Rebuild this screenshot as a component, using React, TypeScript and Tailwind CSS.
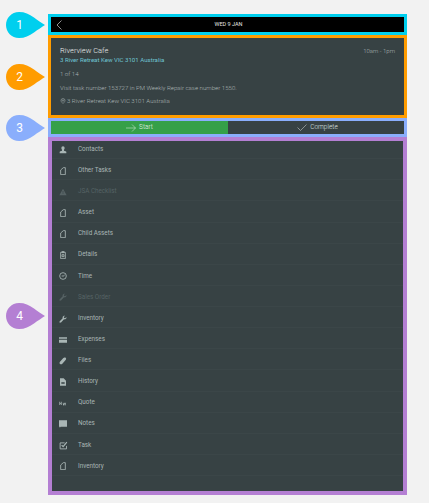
const rows = [
  { label: 'Contacts', icon: 'person' },
  { label: 'Other Tasks', icon: 'doc' },
  { label: 'JSA Checklist', icon: 'warning', disabled: true },
  { label: 'Asset', icon: 'doc' },
  { label: 'Child Assets', icon: 'doc' },
  { label: 'Details', icon: 'clipboard' },
  { label: 'Time', icon: 'clock' },
  { label: 'Sales Order', icon: 'wrench', disabled: true },
  { label: 'Inventory', icon: 'wrench' },
  { label: 'Expenses', icon: 'card' },
  { label: 'Files', icon: 'clip' },
  { label: 'History', icon: 'file' },
  { label: 'Quote', icon: 'quote' },
  { label: 'Notes', icon: 'note' },
  { label: 'Task', icon: 'check' },
  { label: 'Inventory', icon: 'doc' },
];

function RowIcon({ name }: { name: string }) {
  const props = { className: 'w-[8px] h-[8px]', viewBox: '0 0 24 24', fill: 'currentColor' };
  switch (name) {
    case 'person':
      return (
        <svg {...props}>
          <path d="M12 1a5 5 0 0 1 5 5c0 2.500-1.200 4.400-2 5.500v2.500c3 .6 7 1.600 7 4v4H2v-4c0-2.400 4-3.400 7-4v-2.500C8.200 10.400 7 8.500 7 6a5 5 0 0 1 5-5z" />
        </svg>
      );
    case 'doc':
      return (
        <svg {...props} fill="none" stroke="currentColor" strokeWidth={2.6}>
          <path d="M5 23V9l8-7h6v21z" />
        </svg>
      );
    case 'warning':
      return (
        <svg {...props}>
          <path d="M12 2 1 22h22zM13 18h-2v-2h2zm0-4h-2V9h2z" />
        </svg>
      );
    case 'clipboard':
      return (
        <svg {...props} fill="none" stroke="currentColor" strokeWidth={2.6}>
          <path d="M5 4h14v19H5zM9 1h6v4H9zM9 11h6v6H9z" />
        </svg>
      );
    case 'clock':
      return (
        <svg {...props} fill="none" stroke="currentColor" strokeWidth={2.6}>
          <circle cx="12" cy="12" r="10" />
          <path d="M12 13 17 9M8 12h4" />
        </svg>
      );
    case 'wrench':
      return (
        <svg {...props}>
          <path d="M22 6c1 3-.500 6-3.500 7-1.200.400-2.500.300-3.500-.100L6 22.500 2 23l-.500-3.500 9.600-9.500c-.500-1.200-.500-2.500-.100-3.700C12 3.500 15 1.500 18 2.500l-3.500 3.500 1 3 3 1z" />
        </svg>
      );
    case 'card':
      return (
        <svg {...props} className="w-[8px] h-[8px]">
          <path d="M0 4h24v4H0zM0 11h24v9H0z" />
        </svg>
      );
    case 'clip':
      return (
        <svg {...props}>
          <path d="M15 2c1.500-1 3.500-1 5 .500s2 3.500.500 5.500L10 20c-2 2.200-5 2.600-7 .800s-1.600-4.500 0-6.800L13 3z" />
        </svg>
      );
    case 'file':
      return (
        <svg {...props}>
          <path d="M3 1h11l7 7v15H3zM7 12v2h10v-2zm0 4v2h10v-2z" fillRule="evenodd" />
        </svg>
      );
    case 'quote':
      return (
        <svg {...props} className="w-[9px] h-[9px]">
          <path d="M1 7h2v4h2V7h2v9H5v-3H3v3H1zM10 10h1.500l1 4 1-4h1.500l1 4 1-4H19l-2 7h-1.500L14 12.500 12.500 17H11z" />
        </svg>
      );
    case 'note':
      return (
        <svg {...props} className="w-[8px] h-[8px]">
          <path d="M0 1h24v19H5l-3 3v-3H0z" />
        </svg>
      );
    case 'check':
      return (
        <svg {...props} className="w-[9px] h-[9px]" fill="none" stroke="currentColor" strokeWidth={2.4}>
          <path d="M20 13v8H3V5h12" />
          <path d="m7 11 4 4 10-12" strokeWidth={3} />
        </svg>
      );
    default:
      return null;
  }
}

function Badge({ n, color, top }: { n: number; color: string; top: string }) {
  return (
    <div className={`absolute left-[6px] w-[40px] h-[26px] ${top}`}>
      <svg className="absolute inset-0 w-full h-full" viewBox="0 0 40 26">
        <path d="M13 0C19 0 23 2 28 5.500C32 8.500 36 11 39 13C36 15 32 17.500 28 20.500C23 24 19 26 13 26C5.500 26 0 20 0 13S5.500 0 13 0Z" fill={color} />
      </svg>
      <span className="absolute left-0 top-0 w-[27px] h-[26px] flex items-center justify-center text-white text-[12px]">{n}</span>
    </div>
  );
}

export default function App() {
  return (
    <div className="relative w-[429px] h-[503px] bg-[#f2f2f2] pt-[14px] pl-[48px] font-['Roboto',sans-serif] overflow-hidden">
      <Badge n={1} color="#00cfee" top="top-[12px]" />
      <Badge n={2} color="#ff9c00" top="top-[64px]" />
      <Badge n={3} color="#8aaefc" top="top-[115px]" />
      <Badge n={4} color="#b47fd3" top="top-[303px]" />

      <div className="w-[359px] flex flex-col">
        {/* Header */}
        <div className="h-[21px] border-[3px] border-[#00cfee] bg-black flex items-center relative">
          <svg className="w-[6px] h-[10px] ml-[5px]" viewBox="0 0 6 10" fill="none" stroke="#d0d0d0" strokeWidth={0.7}>
            <path d="M5.500.5 1 5l4.500 4.500" />
          </svg>
          <span className="absolute inset-0 pl-[2px] flex items-center justify-center text-[#e4e4e4] text-[5.500px] font-normal">WED 9 JAN</span>
        </div>

        {/* Job summary */}
        <div className="h-[83px] border-[3px] border-[#ff9c00] bg-[#374244] px-[9px] pt-[8px]">
          <div className="flex justify-between items-center">
            <span className="text-[#eceeee] text-[7.500px] leading-[10px] font-light">Riverview Cafe</span>
            <span className="text-[#adb6b6] text-[6px] leading-[10px] font-light">10am - 1pm</span>
          </div>
          <div className="text-[#6fc5d3] text-[6.100px] leading-[8px]">3 River Retreat Kew VIC 3101 Australia</div>
          <div className="text-[#adb6b6] text-[6.100px] leading-[8px] mt-[6px] font-light">1 of 14</div>
          <div className="text-[#adb6b6] text-[6.100px] leading-[8px] mt-[5.500px] font-light">Visit task number 153727 in PM Weekly Repair case number 1550.</div>
          <div className="text-[#adb6b6] text-[6.100px] leading-[8px] mt-[5.500px] flex items-center gap-[1px] font-light">
            <svg className="w-[6px] h-[6px]" viewBox="0 0 24 24" fill="none" stroke="currentColor" strokeWidth={2}>
              <path d="M12 22c-5-5-8-8-8-12a8 8 0 0 1 16 0c0 4-3 7-8 12z" />
              <circle cx="12" cy="10" r="3" />
            </svg>
            <span>3 River Retreat Kew VIC 3101 Australia</span>
          </div>
        </div>

        {/* Actions */}
        <div className="h-[19px] border-[3px] border-[#8aaefc] flex">
          <div className="w-[177px] bg-[#35a048] flex items-center justify-center gap-[3px] text-[#e8f2e9] text-[6.500px] font-light">
            <svg className="w-[10px] h-[8px]" viewBox="0 0 10 8" fill="none" stroke="currentColor" strokeWidth={0.5}>
              <path d="M0 4h9.500M6 .5 9.500 4 6 7.500" />
            </svg>
            Start
          </div>
          <div className="flex-1 pl-[3px] bg-[#374244] flex items-center justify-center gap-[3px] text-[#dfe3e3] text-[6.500px] font-light">
            <svg className="w-[10px] h-[7px]" viewBox="0 0 10 7" fill="none" stroke="currentColor" strokeWidth={0.5}>
              <path d="m.5 3.500 3 3L9.500.5" />
            </svg>
            Complete
          </div>
        </div>

        {/* Menu */}
        <div className="h-[358px] border-[4px] border-[#b47fd3] bg-[#374244] overflow-hidden">
          <div className="-mt-[3px]">
            {rows.map((row, i) => (
              <div
                key={i}
                className={`h-[21.130px] pt-[3px] flex items-center border-b border-[#3b4648] ${row.disabled ? 'text-[#566264]' : 'text-[#a9b6b5]'}`}
              >
                <div className="w-[22px] flex justify-center mr-[4px]">
                  <RowIcon name={row.icon} />
                </div>
                <span className="text-[6.300px]">{row.label}</span>
              </div>
            ))}
          </div>
        </div>
      </div>
    </div>
  );
}
